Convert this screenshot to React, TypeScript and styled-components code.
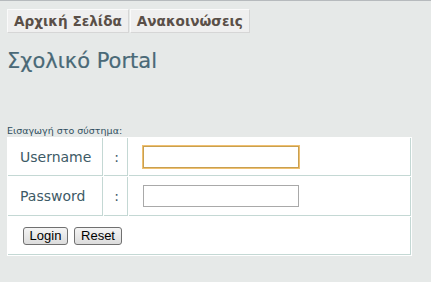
import React from 'react'
import styled, { createGlobalStyle } from 'styled-components'

const GlobalStyle = createGlobalStyle`
  html, body {
    margin: 0;
    padding: 0;
    background: #e6e9e8;
  }
`

const Page = styled.div`
  min-height: 282px;
  box-sizing: border-box;
  border-top: 1px solid #b6babd;
  padding: 8px 7px 0;
  font-family: 'DejaVu Sans', sans-serif;
`

const Nav = styled.nav`
  display: flex;
  gap: 1px;
`

const NavLink = styled.a`
  display: block;
  box-sizing: border-box;
  height: 24px;
  padding: 0 6px;
  line-height: 22px;
  background: #efefef;
  border: 1px solid #d6d6d6;
  border-top-color: #fafafa;
  border-left-color: #fafafa;
  color: #5a4f48;
  font-size: 13.6px;
  font-weight: 700;
  text-decoration: none;
  white-space: nowrap;
`

const Title = styled.h1`
  margin: 15px 0 0;
  font-size: 21px;
  font-weight: 400;
  line-height: 26px;
  color: #4a6977;
  -webkit-text-stroke: 0.2px #4a6977;
`

const Caption = styled.div`
  margin-top: 50px;
  font-size: 9.5px;
  line-height: 13px;
  color: #2f4f5e;
`

const LoginTable = styled.table`
  width: 405px;
  background: #fff;
  border-spacing: 1px;
`

const Cell = styled.td<{ $w?: number; $h?: number }>`
  box-sizing: border-box;
  width: ${({ $w }) => ($w ? `${$w}px` : 'auto')};
  height: ${({ $h }) => ($h ? `${$h}px` : 'auto')};
  padding: 0 0 0 12px;
  text-align: left;
  border-right: 1px solid #c4d8d4;
  border-bottom: 1px solid #c4d8d4;
  font-size: 14px;
  color: #3d5a66;
  vertical-align: middle;
`

const ColonCell = styled(Cell)`
  padding: 0 0 0 2px;
  text-align: center;
`

const InputCell = styled(Cell)`
  padding-left: 14px;
`

const TextInput = styled.input<{ $focused?: boolean }>`
  display: block;
  box-sizing: border-box;
  width: 156px;
  height: 22px;
  margin: 0;
  padding: 0 3px;
  background: #fff;
  border: 1px solid ${({ $focused }) => ($focused ? '#c8a050' : '#a9a9a9')};
  box-shadow: ${({ $focused }) => ($focused ? '0 0 0 1px #f0c070' : 'none')};
  outline: none;
`

const ButtonRow = styled.div`
  display: flex;
  gap: 6px;
  padding-left: 3px;
`

const Button = styled.button<{ $w: number }>`
  box-sizing: border-box;
  width: ${({ $w }) => $w}px;
  height: 18px;
  padding: 0;
  border: 1px solid #707070;
  border-radius: 3px;
  background: linear-gradient(#f4f4f4, #dcdcdc);
  font-family: 'Liberation Sans', Arial, sans-serif;
  font-size: 13px;
  line-height: 16px;
  color: #000;
`

export default function App() {
  return (
    <>
      <GlobalStyle />
      <Page>
        <Nav>
          <NavLink href="#">Αρχική Σελίδα</NavLink>
          <NavLink href="#">Ανακοινώσεις</NavLink>
        </Nav>
        <Title>Σχολικό Portal</Title>
        <Caption>Εισαγωγή στο σύστημα:</Caption>
        <LoginTable>
          <tbody>
            <tr>
              <Cell $w={95} $h={38}>Username</Cell>
              <ColonCell $w={24}>:</ColonCell>
              <InputCell>
                <TextInput type="text" $focused />
              </InputCell>
            </tr>
            <tr>
              <Cell $h={39}>Password</Cell>
              <ColonCell>:</ColonCell>
              <InputCell>
                <TextInput type="password" />
              </InputCell>
            </tr>
            <tr>
              <Cell colSpan={3} $h={38}>
                <ButtonRow>
                  <Button $w={45}>Login</Button>
                  <Button $w={48}>Reset</Button>
                </ButtonRow>
              </Cell>
            </tr>
          </tbody>
        </LoginTable>
      </Page>
    </>
  )
}
